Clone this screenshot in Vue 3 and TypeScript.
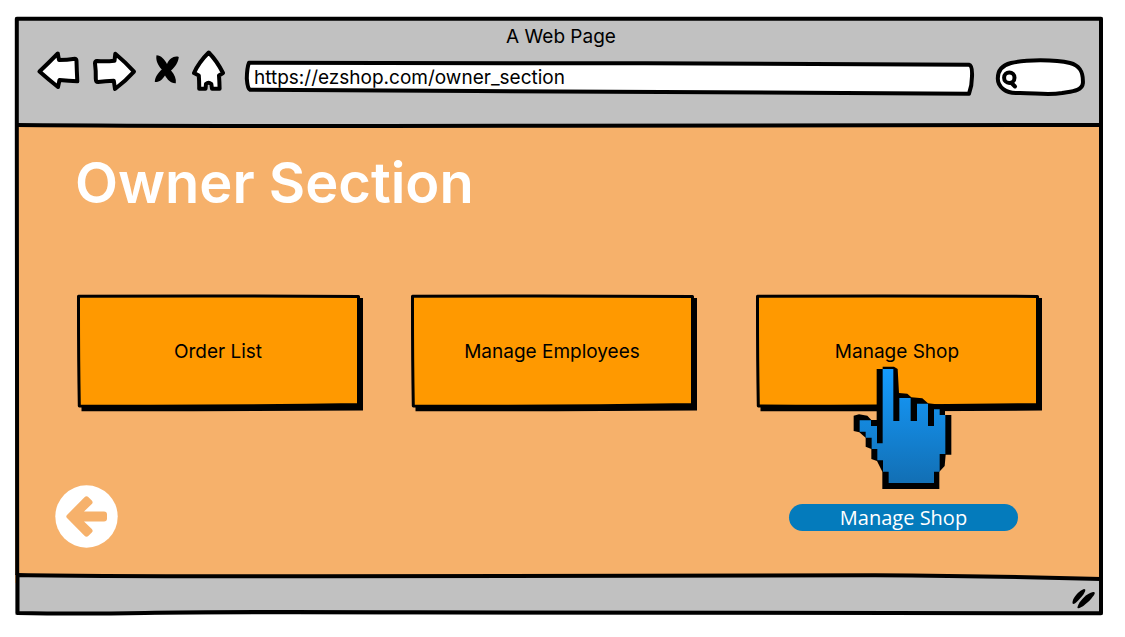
<script setup lang="ts">
import { ref } from 'vue'

interface Section {
  id: string
  label: string
  pointed: boolean
}

const title = ref('A Web Page')
const address = ref('https://ezshop.com/owner_section')
const query = ref('')

const sections: Section[] = [
  { id: 'orders', label: 'Order List', pointed: false },
  { id: 'employees', label: 'Manage Employees', pointed: false },
  { id: 'shop', label: 'Manage Shop', pointed: true },
]
</script>

<template>
  <div class="page">
    <div class="browser">
      <header class="chrome">
        <p class="title">{{ title }}</p>
        <div class="toolbar">
          <nav class="nav" aria-label="Browser controls">
            <button type="button" class="tool" aria-label="Back">
              <svg width="44" height="44" viewBox="0 0 44 44">
                <path class="ink" d="M2.5 21.5 Q11 13.5 20.8 3.5 L22 10 Q30 10 38 8.8 Q39.6 8.8 39.500 11.500 Q39.800 21.500 40.300 31.300 Q32 31 22.500 30 L21 37 Q11 29 2.500 21.500 Z" />
              </svg>
            </button>
            <button type="button" class="tool" aria-label="Forward">
              <svg width="44" height="44" viewBox="0 0 44 44">
                <path class="ink" d="M4 11 Q13 11.700 21.500 10.700 L22.300 3.700 Q32 11.700 41 21.700 Q32 31.700 22 39 L20.800 30.700 Q12 31 5 32 Q2.800 32 2.800 28.700 Q3 20.700 2 13.200 Q2 10.900 4 11 Z" />
              </svg>
            </button>
            <button type="button" class="tool" aria-label="Stop">
              <svg width="30" height="44" viewBox="0 0 30 44">
                <path d="M7.500 5.300 C12 5.300 15.500 9.500 18 14 C20.500 8.500 25 5.500 29.800 7 C29 13 26 17 22 20.500 C25.500 24.500 27.500 29 26.800 33.200 C21.500 33.500 18.500 29.500 16 25.500 C13.500 29.500 10.500 32.300 5.800 32 C6 27 9 23 12.800 19.500 C9 15.500 6.500 10.500 7.500 5.300 Z" />
              </svg>
            </button>
            <button type="button" class="tool" aria-label="Home">
              <svg width="34" height="44" viewBox="0 0 34 44">
                <path class="ink" d="M17.700 2.500 Q26 11 32 23 L28 25.500 Q28.500 32 28.600 38.700 L21 38.700 L20.300 34 Q17.500 31.500 15 34 L14.500 38.700 L8.200 38.700 Q8.300 32 7.800 25.500 L3 23 Q8 12 17.700 2.500 Z" />
              </svg>
            </button>
          </nav>
          <label class="address">
            <svg class="shape" viewBox="0 0 730 48" preserveAspectRatio="none">
              <path class="ink" d="M4 12.800 Q200 12.300 400 13.300 T724 14.800 Q727.500 15.500 727 26.500 Q727 35.500 724 43.700 Q360 42.500 230 41 Q120 40 5 39.800 Q2.500 38.500 1.800 28.500 Q2 17.500 4 12.800 Z" />
            </svg>
            <input v-model="address" type="text" aria-label="Address" />
          </label>
          <label class="search">
            <svg class="shape" viewBox="0 0 90 48" preserveAspectRatio="none">
              <path class="ink" d="M2.800 28.500 C2.800 20 8 15 16 13 C30 9.500 60 9.300 75 13 C85 15.500 88.300 22 87.900 33 C87.200 42 74 41.500 67 43 C52 45.500 38 42.500 22 43 C11 43.500 2.800 37 2.800 28.500 Z" />
              <circle class="lens" cx="14.300" cy="27.700" r="5.200" />
              <path class="lens" d="M16.500 33 L20 36.500" />
            </svg>
            <input v-model="query" type="text" aria-label="Search" />
          </label>
        </div>
        <svg class="shape" viewBox="0 0 1088 109" preserveAspectRatio="none">
          <path class="line" d="M1.800 109 V1.800 Q500 1 1086 1.800 V109" />
          <path class="line" d="M1.800 107.900 Q200 109.500 544 108.700 T1086 107.900" />
        </svg>
      </header>

      <main class="content">
        <h1>Owner Section</h1>
        <div class="cards">
          <button v-for="section in sections" :key="section.id" type="button" class="card">
            <svg class="shape" viewBox="0 0 286 117" preserveAspectRatio="none">
              <path d="M4.500 111 L281 4 H286 V116.500 Q150 117.500 4.500 117.300 Z" />
              <path class="panel" d="M1.500 2.300 Q140 1.500 281.500 2.500 V110.500 Q140 112.800 2.300 112 Q1.400 60 1.500 2.300 Z" />
            </svg>
            <span class="label">{{ section.label }}</span>
            <svg v-if="section.pointed" class="hand" width="99" height="124" viewBox="42 33 297 372">
              <defs>
                <linearGradient id="handFill" x1="0" y1="0" x2="0" y2="1">
                  <stop offset="0" stop-color="#159cff" />
                  <stop offset="1" stop-color="#126fb4" />
                </linearGradient>
              </defs>
              <path d="M131 35H165L176 42L180 114L205 116L217 127L250 130L267 145L305 149L318 168V180H337V299H320L317 333L301 350V402H130V350L114 318L97 312V282L80 275V248L61 232L44 228V182L60 178L85 182L97 195H113V42H131Z" />
              <path fill="url(#handFill)" d="M131 42H163V198H181V129H215V198H234V146H267V213H285V163H302V180H319V297H302V350H285V384H149V350H132V316H115V282H98V248H80V230H62V196H96V213H114V265H131Z" />
            </svg>
          </button>
        </div>
        <div class="actions">
          <button type="button" class="back" aria-label="Go back">
            <svg width="63" height="63" viewBox="0 0 63 63">
              <circle cx="31.500" cy="31.500" r="31.200" fill="#fff" />
              <path class="arrow" d="M12 30 L29.500 12.200 Q31.500 10.200 33.500 12.200 L36.800 15.400 Q38.500 17.200 36.800 19 L29 26.500 H49 Q52 26.500 52 29.500 V33.500 Q52 36.500 49 36.500 H29 L36.800 44 Q38.500 45.800 36.800 47.600 L33.500 50.800 Q31.500 52.800 29.500 50.800 L12 33 Q10.500 31.500 12 30 Z" />
            </svg>
          </button>
          <div class="tip" role="tooltip">Manage Shop</div>
        </div>
        <svg class="shape" viewBox="0 0 1088 448" preserveAspectRatio="none">
          <path class="line" d="M1.800 0 Q1.200 220 2.200 448 M1086 0 V448" />
        </svg>
      </main>

      <footer class="status">
        <svg class="shape" viewBox="0 0 1088 40" preserveAspectRatio="none">
          <path class="line bar" d="M2.500 0 Q100 1.500 300 1.300 L860 .300 Q980 1 1086 4 V38.300 Q700 39 400 37.300 Q200 36.500 130 38 Q60 39 2.500 38 Z" />
          <path class="line" d="M1086 0 V6" />
        </svg>
        <svg class="grip" width="24" height="22" viewBox="0 0 24 22">
          <path d="M.5 15 C1 10 8 3 12 2 C14.500 2 13 5 11 8 C8 12 3 17 1.500 17 C.5 17 .5 16 .5 15 Z" />
          <path d="M5.500 20 C7 14 15 6 21 5 C24.500 5 22.500 8 19 12 C15 16.500 9 21 6.500 21.300 C5.500 21.300 5.300 20.800 5.500 20 Z" />
        </svg>
      </footer>
    </div>
  </div>
</template>

<style>
body {
  margin: 0;
  background: #fff;
}
</style>

<style scoped>
.page {
  box-sizing: border-box;
  min-height: 100vh;
  padding: 17px 22px 23px 15px;
  display: flex;
  font-family: Inter, "Liberation Sans", sans-serif;
  font-size: 19px;
  line-height: 24px;
  color: #000;
}

.browser {
  flex: 1;
  min-width: 0;
  display: flex;
  flex-direction: column;
}

button {
  padding: 0;
  border: 0;
  background: none;
  font: inherit;
  color: inherit;
  cursor: pointer;
}

svg {
  display: block;
}

.shape {
  position: absolute;
  inset: 0;
  width: 100%;
  height: 100%;
  overflow: visible;
  pointer-events: none;
}

.ink {
  fill: #fff;
  stroke: #000;
  stroke-width: 4;
  stroke-linejoin: round;
}

.line {
  fill: none;
  stroke: #000;
  stroke-width: 4;
  stroke-linejoin: round;
  vector-effect: non-scaling-stroke;
}

.chrome {
  position: relative;
  z-index: 1;
  height: 109px;
  box-sizing: border-box;
  padding: 8px 18px 0 22px;
  background: #c1c1c1;
}

.title {
  margin: 0;
  text-align: center;
}

.toolbar {
  display: flex;
  gap: 20px;
  margin-top: 1px;
}

.nav {
  display: flex;
  align-items: flex-start;
  gap: 12px;
}

.address,
.search {
  position: relative;
  display: flex;
  height: 48px;
}

.address {
  flex: 1;
  min-width: 0;
}

.search {
  width: 90px;
}

.address input,
.search input {
  position: relative;
  box-sizing: border-box;
  width: 100%;
  min-width: 0;
  padding: 7px 9px 0;
  border: 0;
  outline: 0;
  background: none;
  font: inherit;
  color: inherit;
}

.search input {
  padding-left: 24px;
}

.lens {
  fill: none;
  stroke: #000;
  stroke-width: 4;
  stroke-linecap: round;
}

.content {
  position: relative;
  flex: 1;
  padding: 21px 0 27px;
  background: #f6b16b;
}

h1 {
  margin: 0 60px;
  font-size: 56px;
  line-height: 72px;
  font-weight: 600;
  color: #fff;
}

.cards {
  display: flex;
  gap: 48px;
  margin: 75px 61px 0 62px;
}

.card {
  position: relative;
  flex: 1;
  height: 117px;
  padding: 0 4px 1px 0;
}

.card:last-child {
  margin-left: 11px;
}

.panel {
  fill: #f90;
  stroke: #000;
  stroke-width: 3;
  stroke-linejoin: round;
}

.label {
  position: relative;
}

.hand {
  position: absolute;
  top: 72px;
  left: 34%;
  z-index: 1;
}

.actions {
  display: flex;
  align-items: center;
  justify-content: space-between;
  margin: 74px 85px 0 40px;
}

.arrow {
  fill: #f6b16b;
}

.tip {
  width: 229px;
  height: 27px;
  margin-top: 2px;
  border-radius: 14px;
  background: #047bbc;
  font-family: "Open Sans", "Noto Sans", sans-serif;
  font-size: 20px;
  line-height: 28px;
  text-align: center;
  color: #fff;
}

.status {
  position: relative;
  display: flex;
  justify-content: flex-end;
  align-items: center;
  height: 40px;
  box-sizing: border-box;
  padding: 5px 7px 0 0;
  background: linear-gradient(#f6b16b 8px, #c1c1c1 8px);
}

.bar {
  fill: #c1c1c1;
}

.grip {
  position: relative;
}
</style>
